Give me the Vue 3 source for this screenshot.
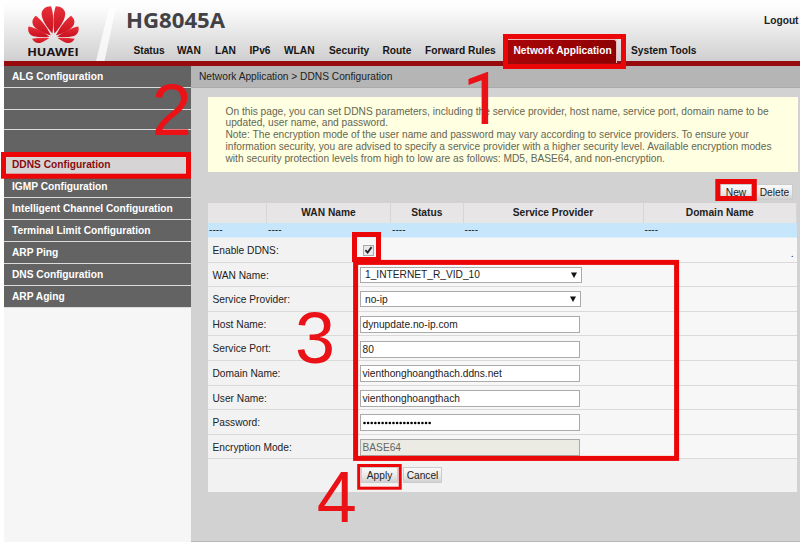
<script setup>
const nav = [
  { label: 'Status', w: 43.5 },
  { label: 'WAN', w: 38 },
  { label: 'LAN', w: 34.5 },
  { label: 'IPv6', w: 34.5 },
  { label: 'WLAN', w: 45 },
  { label: 'Security', w: 53.5 },
  { label: 'Route', w: 42.5 },
  { label: 'Forward Rules', w: 83 },
]
const menu = [
  'ALG Configuration', '', '', '', 'DDNS Configuration', 'IGMP Configuration',
  'Intelligent Channel Configuration', 'Terminal Limit Configuration',
  'ARP Ping', 'DNS Configuration', 'ARP Aging',
]
const columns = ['', 'WAN Name', 'Status', 'Service Provider', 'Domain Name']
const fields = [
  { label: 'WAN Name:', value: '1_INTERNET_R_VID_10', type: 'select wide' },
  { label: 'Service Provider:', value: 'no-ip', type: 'select' },
  { label: 'Host Name:', value: 'dynupdate.no-ip.com', type: 'text' },
  { label: 'Service Port:', value: '80', type: 'text' },
  { label: 'Domain Name:', value: 'vienthonghoangthach.ddns.net', type: 'text' },
  { label: 'User Name:', value: 'vienthonghoangthach', type: 'text' },
  { label: 'Password:', value: '', type: 'password' },
  { label: 'Encryption Mode:', value: 'BASE64', type: 'text disabled' },
]
const boxes = [
  { x: 505.5, y: 36.5, w: 118, h: 30, t: 5 },
  { x: 3.5, y: 154.5, w: 185, h: 21.7, t: 5 },
  { x: 717.8, y: 181.5, w: 36.5, h: 17, t: 5 },
  { x: 354.5, y: 234.5, w: 24, h: 25, t: 5 },
  { x: 355.6, y: 262.4, w: 321, h: 196, t: 5 },
  { x: 358.7, y: 465.5, w: 41.5, h: 22.7, t: 3 },
]
const steps = [
  { n: 1, x: 462.5, y: 124 },
  { n: 2, x: 151.8, y: 135 },
  { n: 3, x: 295, y: 362.7 },
  { n: 4, x: 316.8, y: 522 },
]
</script>

<template>
  <div class="page">
    <header class="header">
      <div class="brand">
        <svg class="logo" width="54" height="40" viewBox="26 5 54 40">
          <defs>
            <linearGradient id="petal" x1="0" y1="0" x2="0" y2="1">
              <stop offset="0" stop-color="#e8303a" />
              <stop offset="1" stop-color="#c8101f" />
            </linearGradient>
            <g id="half" fill="url(#petal)">
              <path d="M52.4 33.5C53.6 25 54 14 51 6.2C45.5 6.2 41.4 9.6 41.6 14.2C42 20.5 47.5 28 52.4 33.5Z" />
              <path d="M50.8 35.3C47.2 27.8 41.5 19.8 35.8 15.8C32.6 18.4 31.4 22.2 33.4 25.4C36.4 30 44.5 33.5 50.8 35.3Z" />
              <path d="M49.6 36.8C43.5 32 35.8 27.8 28.4 26.6C27.4 31.5 29.4 35.3 33.8 36.3C38.8 37.4 44.8 37.2 49.6 36.8Z" />
              <path d="M49.2 38C44 37.5 38 37.7 32 38.8C34 42.4 37.4 43.8 40.8 42.7C44 41.6 46.9 39.8 49.2 38Z" />
            </g>
          </defs>
          <use href="#half" />
          <use href="#half" transform="translate(106.8 0) scale(-1 1)" />
        </svg>
        <span class="wordmark">HUAWEI</span>
      </div>
      <svg class="slash" width="20" height="61" viewBox="0 0 20 61">
        <path d="M13 8H20L8.5 61H0Z" fill="#fff" opacity=".75" />
      </svg>
      <div class="headmain">
        <div class="titlebar"><h1>HG8045A</h1><a class="logout">Logout</a></div>
        <nav class="nav">
          <a v-for="n in nav" :key="n.label" :style="{ width: n.w + 'px' }">{{ n.label }}</a>
          <a class="current">Network Application</a>
          <a>System Tools</a>
        </nav>
      </div>
    </header>
    <div class="body">
      <aside class="side">
        <div v-for="(m, i) in menu" :key="i" class="item" :class="{ active: i === 4, short: i === 2, joined: i === 3 }">{{ m }}</div>
      </aside>
      <main class="main">
        <div class="crumb">Network Application &gt; DDNS Configuration</div>
        <div class="notice">
          On this page, you can set DDNS parameters, including the service provider, host name, service port, domain name to be<br>
          updated, user name, and password.<br>
          Note: The encryption mode of the user name and password may vary according to service providers. To ensure your<br>
          information security, you are advised to specify a service provider with a higher security level. Available encryption modes<br>
          with security protection levels from high to low are as follows: MD5, BASE64, and non-encryption.
        </div>
        <div class="tools"><span class="btn new">New</span><span class="btn del">Delete</span></div>
        <div class="grid heads"><span v-for="(c, i) in columns" :key="i">{{ c }}</span></div>
        <div class="grid blank"><span v-for="i in 5" :key="i">----</span></div>
        <div class="row">
          <div class="label">Enable DDNS:</div>
          <div class="control enable">
            <span class="check"><svg width="10" height="10" viewBox="0 0 10 10"><path d="M1.6 5.2L4 7.8L8.4 1.8" fill="none" stroke="#222" stroke-width="2" /></svg></span>
            <span class="dot">.</span>
          </div>
        </div>
        <div v-for="f in fields" :key="f.label" class="row">
          <div class="label">{{ f.label }}</div>
          <div class="control">
            <div class="field" :class="f.type">
              <span v-if="f.type !== 'password'">{{ f.value }}</span>
              <svg v-else class="dots" width="70" height="4"><circle v-for="i in 19" :key="i" :cx="(i - 1) * 3.62 + 1.5" cy="2" r="1.3" /></svg>
              <svg v-if="f.type.startsWith('select')" width="6" height="6" viewBox="0 0 6 6"><path d="M0 .5H6L3 6Z" fill="#111" /></svg>
            </div>
          </div>
        </div>
        <div class="actions"><span class="btn apply">Apply</span><span class="btn cancel">Cancel</span></div>
      </main>
    </div>
    <svg class="marks" width="800" height="544">
      <rect v-for="b in boxes" :key="b.x" :x="b.x" :y="b.y" :width="b.w" :height="b.h" :stroke-width="b.t" fill="none" stroke="#eb0608" />
      <text v-for="s in steps" :key="s.n" :x="s.x" :y="s.y" class="step" :class="{ plain: s.n === 1 }">{{ s.n }}</text>
    </svg>
  </div>
</template>

<style>
body { background: #fff; overflow: hidden; }
</style>

<style scoped>
* { box-sizing: border-box; }
.page { position: relative; width: 800px; height: 544px; overflow: hidden; padding-left: 4px; font-family: "Liberation Sans", Arial, sans-serif; font-size: 10.2px; color: #222; white-space: nowrap; }
.header { display: flex; height: 66px; border-bottom: 5px solid #970b0e; background: linear-gradient(#fff 0, #fcfcfc 8px, #cfcfcf 61px); }
.brand { width: 92px; display: flex; flex-direction: column; padding: 5px 0 0 22px; }
.logo { display: block; }
.wordmark { font: bold 11px/14px "Open Sans", sans-serif; color: #1c1314; padding-left: 1px; transform: scaleX(1.15); transform-origin: 0 0; width: 44px; }
.slash { flex: none; }
.headmain { flex: 1; padding-left: 10px; }
.titlebar { display: flex; justify-content: space-between; height: 39px; }
h1 { margin: 0; padding-top: 5px; font: bold 22.2px/30px "Open Sans", "Noto Sans", sans-serif; color: #424246; }
.logout { font-weight: bold; padding: 15px 1.5px 0 0; line-height: 12px; }
.nav { display: flex; height: 22px; padding-left: 7.5px; font-weight: bold; line-height: 23px; color: #151515; }
.nav a { flex: none; }
.nav .current { width: 112px; height: 24px; margin: 0 14px 0 -3px; padding-left: 7.5px; background: linear-gradient(90deg, #a80508, #8e0003); border: 1px solid #e9b9ba; border-bottom: 0; border-radius: 3px 3px 0 0; color: #fff; line-height: 21px; }
.body { display: flex; height: 476px; }
.side { width: 187px; background: #f6f6f6; }
.item { height: 22px; padding-left: 8px; line-height: 22px; font-weight: bold; color: #fff; background: #636363; border-bottom: 1px solid #dcdcdc; }
.item.short { height: 20px; }
.item.joined { height: 24px; border-bottom-color: #636363; }
.item.active { background: #d6d4d5; color: #8a0b10; }
.main { flex: 1; min-width: 0; padding: 0 3px 0 17px; background: #d2d2d2; border-bottom: 1px solid #b8b8b8; }
.crumb { height: 22px; margin: 0 -3px 0 -17px; padding-left: 8px; line-height: 21px; background: #b5b5b5; border-bottom: 1px solid #aaa; }
.notice { height: 75px; margin: 9px -1px 0 0; padding: 8.5px 0 0 17.5px; background: #ffffe1; color: #666652; line-height: 11.85px; }
.tools { height: 31px; display: flex; justify-content: flex-end; padding: 12px 4px 0 0; gap: 5px; }
.btn { display: block; height: 16px; line-height: 16px; text-align: center; background: linear-gradient(#fafafa, #e8e8e8 60%, #d0d0d0); border: 1px solid #ccc; }
.new { width: 32px; }
.del { width: 37px; margin-left: -1px; }
.tools .btn { line-height: 15px; }
.grid { display: grid; grid-template-columns: 59px 124px 72.5px 180px 1fr; }
.heads { height: 19.5px; background: #e7e5e6; font-weight: bold; text-align: center; line-height: 19px; }
.heads span { border-right: 1px solid #d6d6d6; }
.blank { height: 15.5px; background: #c6e6fc; border-bottom: 1px solid #dceefa; line-height: 14px; }
.blank span { padding-left: 1px; }
.row { display: flex; height: 24.6px; }
.label { width: 144px; padding-left: 4.5px; line-height: 25px; background: #f2f2f2; border-bottom: 1px solid #dadada; }
.control { flex: 1; padding: 4.2px 0 0 8px; background: #f7f7f7; border-bottom: 1px solid #dadada; }
.enable { display: flex; justify-content: space-between; padding: 6.5px 3.5px 0 11.4px; }
.check { width: 11px; height: 11px; background: #e9e9f0; border: 1px solid #aaa; display: flex; align-items: center; justify-content: center; }
.dot { padding-top: 3px; line-height: 11px; }
.field { display: flex; align-items: center; width: 220px; height: 17px; padding: 0 1.5px; border: 1px solid #aaa; background: #fff; }
.select { width: 221px; height: 16px; justify-content: space-between; padding: 0 4px; }
.select.wide { width: 222px; }
.disabled { background: #ebebe4; color: #666; }
.actions { display: flex; gap: 5px; height: 32.5px; padding: 8px 0 0 153px; background: #f2f2f2; }
.actions .btn { line-height: 15.5px; }
.apply { width: 37px; }
.cancel { width: 39px; }
.marks { position: absolute; left: 0; top: 0; }
.step { font-size: 72px; fill: #ea1217; }
.step.plain { font-family: Roboto, sans-serif; }
</style>
